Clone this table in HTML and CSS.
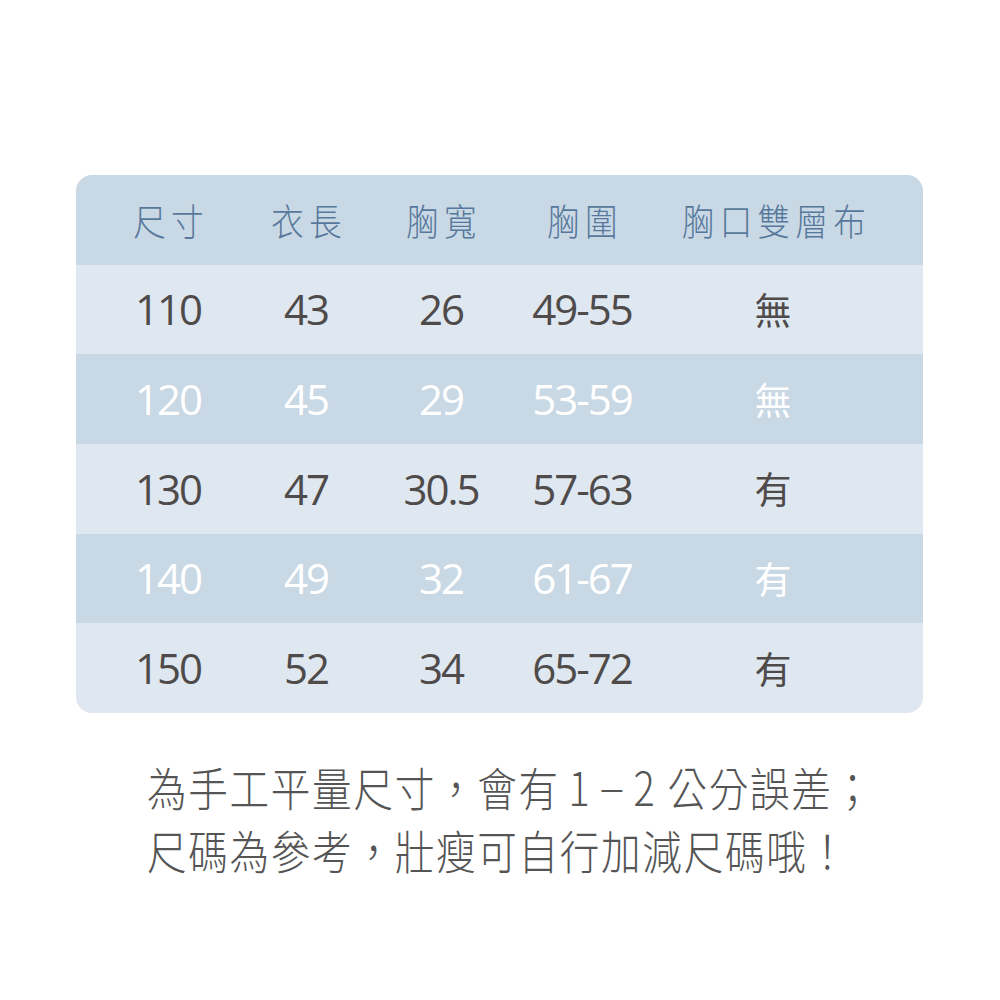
FILE: index.html
```html
<!DOCTYPE html>
<html lang="zh-Hant">
<head>
<meta charset="utf-8">
<title>尺寸表</title>
<link rel="stylesheet" href="styles.css">
</head>
<body>
<div class="page">
  <div class="table">
    <div class="row head">
      <div class="cell"><span class="hd">尺寸</span></div>
      <div class="cell"><span class="hd">衣長</span></div>
      <div class="cell"><span class="hd">胸寬</span></div>
      <div class="cell"><span class="hd">胸圍</span></div>
      <div class="cell"><span class="hd">胸口雙層布</span></div>
    </div>
    <div class="row light">
      <div class="cell">110</div><div class="cell">43</div><div class="cell">26</div><div class="cell">49-55</div><div class="cell cjk">無</div>
    </div>
    <div class="row dark">
      <div class="cell">120</div><div class="cell">45</div><div class="cell">29</div><div class="cell">53-59</div><div class="cell cjk">無</div>
    </div>
    <div class="row light">
      <div class="cell">130</div><div class="cell">47</div><div class="cell">30.5</div><div class="cell">57-63</div><div class="cell cjk">有</div>
    </div>
    <div class="row dark">
      <div class="cell">140</div><div class="cell">49</div><div class="cell">32</div><div class="cell">61-67</div><div class="cell cjk">有</div>
    </div>
    <div class="row light">
      <div class="cell">150</div><div class="cell">52</div><div class="cell">34</div><div class="cell">65-72</div><div class="cell cjk">有</div>
    </div>
  </div>
  <div class="note">
    <p class="line">為手工平量尺寸，會有<span class="rng">1<span class="dash">–</span>2</span>公分誤差；</p>
    <p class="line">尺碼為參考，壯瘦可自行加減尺碼哦！</p>
  </div>
</div>
</body>
</html>
```
FILE: styles.css
```css
html, body {
  margin: 0;
  padding: 0;
  background: #ffffff;
}

.page {
  width: 1000px;
  height: 1000px;
  padding-top: 175px;
  box-sizing: border-box;
}

.table {
  margin-left: 76px;
  width: 847px;
  height: 538px;
  border-radius: 16px;
  overflow: hidden;
  display: grid;
  grid-template-rows: repeat(6, 1fr);
}

.row {
  display: grid;
  grid-template-columns: 136px 140px 130px 152px 230px;
  padding-left: 24px;
  align-items: center;
}

.head, .dark {
  background: #c9d8e5;
}

.light {
  background: #dfe7f0;
}

.cell {
  text-align: center;
  font-family: "Open Sans", "Noto Sans CJK TC", sans-serif;
  font-size: 42px;
  font-weight: 500;
  line-height: 1;
  letter-spacing: -2px;
  color: #4e4b4a;
}

.dark .cell {
  color: #ffffff;
}

.cell.cjk {
  font-family: "Noto Sans CJK TC", sans-serif;
  font-size: 37px;
  font-weight: 400;
  letter-spacing: 0;
}

.hd {
  display: inline-block;
  font-family: "Noto Sans CJK TC", sans-serif;
  font-size: 37px;
  font-weight: 300;
  color: #58789b;
  letter-spacing: 6px;
  margin-right: -6px;
  transform: scaleX(0.88);
}

.note {
  margin-top: 42px;
  margin-left: 147px;
}

.line {
  margin: 0;
  font-family: "Noto Sans CJK TC", sans-serif;
  font-size: 46px;
  font-weight: 300;
  line-height: 63px;
  color: #555555;
  letter-spacing: 2px;
  white-space: nowrap;
  transform: scaleX(0.86);
  transform-origin: left center;
}

.rng {
  letter-spacing: 11px;
  margin-left: 10px;
  margin-right: 4px;
}

.dash {
  display: inline-block;
  font-family: "Open Sans", sans-serif;
  font-weight: 300;
  font-size: 46px;
  line-height: 46px;
  letter-spacing: 0;
  margin: 0 14px 0 3px;
  vertical-align: 3px;
  transform: scaleX(1.25);
}
```
